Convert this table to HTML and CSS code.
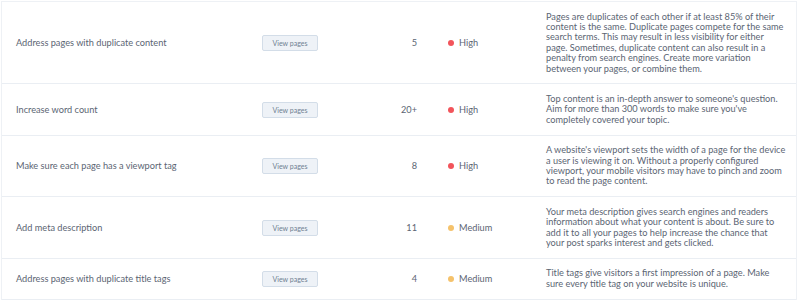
FILE: index.html
```html
<!DOCTYPE html>
<html>
<head>
<meta charset="utf-8">
<link rel="stylesheet" href="styles.css">
</head>
<body>
<div class="table">
  <div class="row">
    <div class="name">Address pages with duplicate content</div>
    <div class="action"><button class="btn">View pages</button></div>
    <div class="count">5</div>
    <div class="prio"><span class="dot high"></span>High</div>
    <div class="desc">Pages are duplicates of each other if at least 85% of their content is the same. Duplicate pages compete for the same search terms. This may result in less visibility for either page. Sometimes, duplicate content can also result in a penalty from search engines. Create more variation between your pages, or combine them.</div>
  </div>
  <div class="row">
    <div class="name">Increase word count</div>
    <div class="action"><button class="btn">View pages</button></div>
    <div class="count">20+</div>
    <div class="prio"><span class="dot high"></span>High</div>
    <div class="desc">Top content is an in-depth answer to someone's question. Aim for more than 300 words to make sure you've completely covered your topic.</div>
  </div>
  <div class="row">
    <div class="name">Make sure each page has a viewport tag</div>
    <div class="action"><button class="btn">View pages</button></div>
    <div class="count">8</div>
    <div class="prio"><span class="dot high"></span>High</div>
    <div class="desc">A website's viewport sets the width of a page for the device a user is viewing it on. Without a properly configured viewport, your mobile visitors may have to pinch and zoom to read the page content.</div>
  </div>
  <div class="row">
    <div class="name">Add meta description</div>
    <div class="action"><button class="btn">View pages</button></div>
    <div class="count">11</div>
    <div class="prio"><span class="dot medium"></span>Medium</div>
    <div class="desc">Your meta description gives search engines and readers information about what your content is about. Be sure to add it to all your pages to help increase the chance that your post sparks interest and gets clicked.</div>
  </div>
  <div class="row">
    <div class="name">Address pages with duplicate title tags</div>
    <div class="action"><button class="btn">View pages</button></div>
    <div class="count">4</div>
    <div class="prio"><span class="dot medium"></span>Medium</div>
    <div class="desc">Title tags give visitors a first impression of a page. Make sure every title tag on your website is unique.</div>
  </div>
</div>
</body>
</html>
```

FILE: styles.css
```css
html, body {
  margin: 0;
  padding: 0;
  background: #ffffff;
}
body {
  padding: 0 3px 0 0;
  font-family: Lato, "Open Sans", sans-serif;
  font-size: 9.2px;
  color: #5b6573;
}
.table {
  margin-top: 1px;
  margin-left: 1px;
  border-top: 1px solid #eef1f5;
  border-left: 1px solid #eef1f5;
  border-right: 1px solid #eef1f5;
}
.row {
  display: grid;
  grid-template-columns: 260px 95px 60px 128px 1fr;
  align-items: center;
  border-bottom: 1px solid #eaeef3;
}
.name {
  padding-left: 14px;
}
.btn {
  font-family: inherit;
  font-size: 7px;
  color: #6f7f92;
  background: #eef2f7;
  border: 1px solid #d3dde8;
  border-radius: 2px;
  width: 56px;
  height: 16px;
  padding: 0;
  line-height: 14px;
}
.count {
  text-align: right;
}
.prio {
  padding-left: 31px;
  display: flex;
  align-items: center;
}
.dot {
  width: 6px;
  height: 6px;
  border-radius: 50%;
  margin-right: 5px;
}
.dot.high { background: #f2545b; }
.dot.medium { background: #f5c26b; }
.desc {
  padding: 9.5px 10px 9.5px 1px;
  line-height: 10.4px;
}
```
